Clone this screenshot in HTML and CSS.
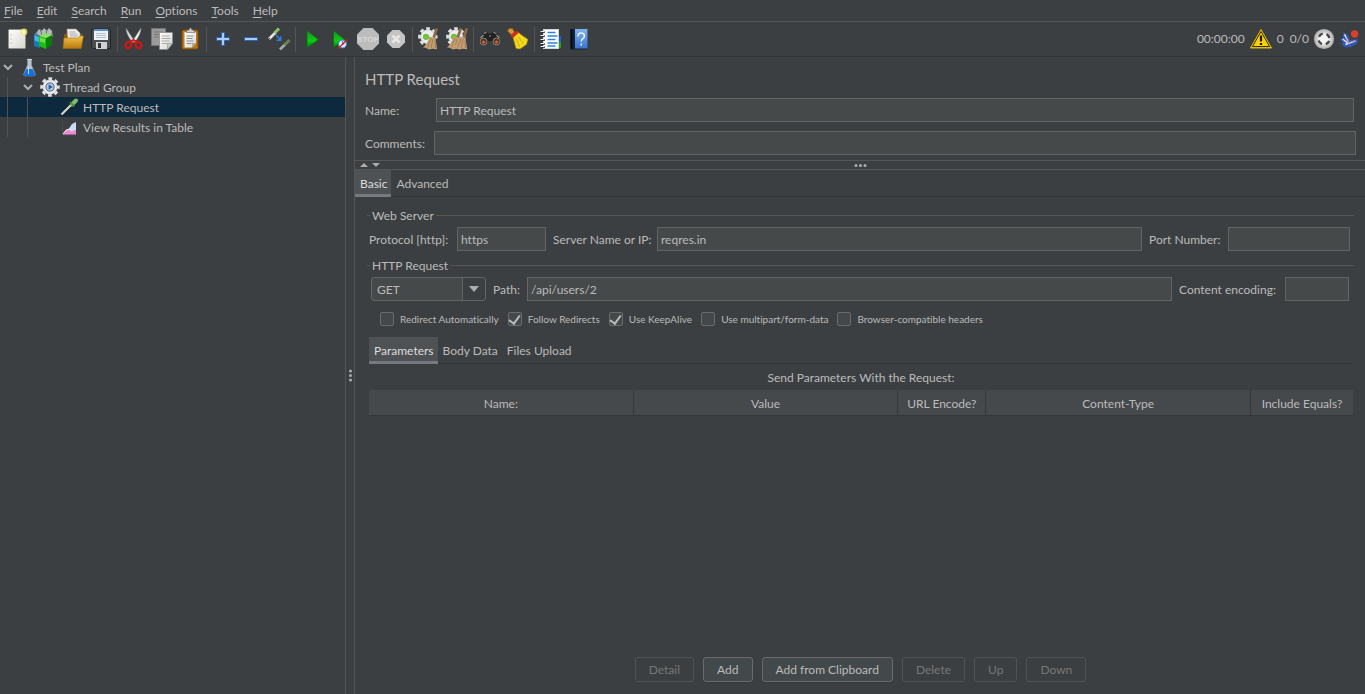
FILE: index.html
```
<!DOCTYPE html>
<html lang="en">
  <head>
    <meta charset="UTF-8" />
    <meta name="viewport" content="width=device-width, initial-scale=1.0" />
    <title>HTTP Request</title>

    <link rel="stylesheet" href="styles.css">
  </head>
  <body>
    <!-- Shared gradients and shapes -->
    <svg class="defs" width="0" height="0" aria-hidden="true">
      <defs>
        <linearGradient id="paper" x1="0" y1="0" x2="1" y2="1">
          <stop offset="0" stop-color="#ffffff" />
          <stop offset="1" stop-color="#d6d6d2" />
        </linearGradient>
        <linearGradient id="gold" x1="0" y1="0" x2="0" y2="1">
          <stop offset="0" stop-color="#f3c34a" />
          <stop offset="1" stop-color="#b9790c" />
        </linearGradient>
        <linearGradient id="green" x1="0" y1="0" x2="0" y2="1">
          <stop offset="0" stop-color="#1f8a2a" />
          <stop offset="0.6" stop-color="#08d010" />
          <stop offset="1" stop-color="#0a6a0e" />
        </linearGradient>
        <linearGradient id="blue" x1="0" y1="0" x2="0" y2="1">
          <stop offset="0" stop-color="#7fb2ee" />
          <stop offset="1" stop-color="#3a76cc" />
        </linearGradient>
        <radialGradient id="steel">
          <stop offset="0.4" stop-color="#f4f4f4" />
          <stop offset="1" stop-color="#a8a8a8" />
        </radialGradient>
        <g id="gear">
          <circle cx="12" cy="12" r="8.5" fill="none" stroke="#dfe1e5" stroke-width="4.500" stroke-dasharray="3.740 2.936" stroke-dashoffset="1.870" />
          <circle cx="12" cy="12" r="8.2" fill="#d5d8dc" />
          <circle cx="12" cy="12" r="7" fill="#eceef0" />
        </g>
        <g id="broom">
          <path d="M16.500 1l2.500 .8-3 9.500-2.600-1z" fill="#8b6a48" />
          <path d="M10.500 9.500l6 1.800 1.600 11-4.500-.6-3.600.8-3.300-1.800-2.700-.2c3.200-2.600 5-6 6.500-11z" fill="#c39e72" />
          <path d="M12 11.500L8.500 20.500M14 12l-2 9M16 13l.5 8" stroke="#94704a" stroke-width=".7" fill="none" />
        </g>
      </defs>
    </svg>

    <nav class="menu-bar">
      <button class="menu"><u>F</u>ile</button>
      <button class="menu"><u>E</u>dit</button>
      <button class="menu"><u>S</u>earch</button>
      <button class="menu"><u>R</u>un</button>
      <button class="menu"><u>O</u>ptions</button>
      <button class="menu"><u>T</u>ools</button>
      <button class="menu"><u>H</u>elp</button>
    </nav>

    <div class="toolbar">
      <button class="tool" aria-label="New">
        <svg viewBox="0 0 24 24"><rect x="3.5" y="2.5" width="17" height="19" rx="1" fill="url(#paper)" stroke="#8f8f8a" /><path d="M5.5 8h1M5.5 12h1M5.5 16h1" stroke="#999" /><circle cx="19" cy="5" r="3.4" fill="#f6e96a" opacity=".8" /><circle cx="19" cy="5" r="1.6" fill="#fffde0" /></svg>
      </button>
      <button class="tool" aria-label="Templates">
        <svg viewBox="0 0 24 24"><path d="M1.500 7L6 3l13 .5 1 6L12 12z" fill="#7d898c" /><path d="M4 5l2-3 3 2 2-3 3 3 2-3 3 3-1 4H5z" fill="#b3babc" /><path d="M7 2l2 6M14 2l-1 6" stroke="#5e7378" /><path d="M1 7l6 2v12l-6-2z" fill="#1677bd" /><path d="M1.500 8L6 10v5l-4.500-1.500z" fill="#4ab2e4" /><path d="M6 9l7 2v11l-7-3z" fill="#21bd12" /><path d="M13 11l6-3v10l-6 4z" fill="#0a7c08" /><path d="M6 9l6-3 7 2-6 3z" fill="#8be35f" /><path d="M7 10.500l5 1.500v4L7 14.500z" fill="#6ae240" /></svg>
      </button>
      <button class="tool" aria-label="Open">
        <svg viewBox="0 0 24 24"><path d="M3 21V8l2-2h13l4 2-1 13z" fill="#8a5d0d" /><path d="M6 2h9l4 4v9H7z" fill="#eee" stroke="#999" stroke-width=".6" /><path d="M8.5 5h6M8.5 7h8M9 9h8" stroke="#999" stroke-width=".8" /><path d="M3 11h14l2-2h3.5L20 21.5H2z" fill="url(#gold)" stroke="#a06c0c" stroke-width=".6" /></svg>
      </button>
      <button class="tool" aria-label="Save">
        <svg viewBox="0 0 24 24"><path d="M3 2h17.500l1 1v18.500H4L2.500 20V3z" fill="#4b4d50" stroke="#242526" /><rect x="5" y="2" width="14" height="11" fill="#f0f3f6" /><rect x="5" y="2" width="14" height="2" fill="#5a91cb" /><path d="M7 6.500h10M7 8.500h10M7 10.500h10" stroke="#9db3c9" stroke-width=".8" /><rect x="7" y="15" width="11" height="7" fill="#cfd1d3" /><rect x="9" y="16" width="3" height="5" fill="#333" /></svg>
      </button>
      <span class="tool-separator"></span>
      <button class="tool" aria-label="Cut">
        <svg viewBox="0 0 24 24"><path d="M4 1l8.500 13-2 1.500C7 11 4 6 4 1z" fill="#d6d8da" stroke="#777" stroke-width=".4" /><path d="M19 1l-8.500 13 2 1.500C16 11 19 6 19 1z" fill="#f1f1f1" stroke="#777" stroke-width=".4" /><ellipse cx="6.500" cy="18" rx="2.700" ry="3.400" transform="rotate(30 6.500 18)" fill="none" stroke="#d8140f" stroke-width="2.200" /><ellipse cx="16.500" cy="18" rx="2.700" ry="3.400" transform="rotate(-30 16.500 18)" fill="none" stroke="#d8140f" stroke-width="2.200" /><path d="M8 15l3.500-2 3.500 2" fill="none" stroke="#d8140f" stroke-width="2" /></svg>
      </button>
      <button class="tool" aria-label="Copy">
        <svg viewBox="0 0 24 24"><path d="M1.500 1.500h14v17h-14z" fill="#9b9b9b" stroke="#777" /><path d="M4 5h9M4 7.500h9M4 10h7" stroke="#777" /><path d="M9.500 5.500h13v11l-5 6h-8z" fill="url(#paper)" stroke="#888" stroke-width=".7" /><path d="M11.500 9h8M11.500 11.500h9M11.500 14h8M11.500 16.500h6" stroke="#999" stroke-width=".8" /><path d="M17.500 22.500v-6h5z" fill="#c7c7c4" stroke="#888" stroke-width=".5" /></svg>
      </button>
      <button class="tool" aria-label="Paste">
        <svg viewBox="0 0 24 24"><rect x="4" y="3" width="16" height="19" rx="1.500" fill="#b97718" stroke="#7b4c0b" /><path d="M6.500 5h11.500v11l-4 4.500h-7.500z" fill="url(#paper)" /><path d="M8.500 9h7M8.500 11.500h6M8.500 14h7M8.500 16.500h5" stroke="#8e8e8e" /><path d="M14 20.500v-4.500h4z" fill="#aaa" /><path d="M8 5.500l1.500-2.500h1.500l1-2h1l1 2h1.500L17 5.500z" fill="#d2d2d2" stroke="#666" stroke-width=".6" /></svg>
      </button>
      <span class="tool-separator"></span>
      <button class="tool" aria-label="Expand all">
        <svg viewBox="0 0 24 24"><path d="M10.500 5.500h3v5h5v3h-5v5h-3v-5h-5v-3h5z" fill="#a9cdf5" stroke="#2f62ae" /></svg>
      </button>
      <button class="tool" aria-label="Collapse all">
        <svg viewBox="0 0 24 24"><rect x="5.500" y="10.500" width="13" height="3" fill="#a9cdf5" stroke="#2f62ae" /></svg>
      </button>
      <button class="tool" aria-label="Toggle">
        <svg viewBox="0 0 24 24"><path d="M2 12l7-7" stroke="#e3e3e0" stroke-width="2.600" /><path d="M7.500 6L12 1.500" stroke="#8cc46a" stroke-width="3" /><path d="M1 13l2-2" stroke="#333" /><path d="M9 8l4 4" stroke="#2b7be0" stroke-width="1.500" /><path d="M14.500 8.500v5.500H9z" fill="#2b7be0" /><path d="M13 22.500l6-6" stroke="#a8a8a5" stroke-width="2.600" /><path d="M17.500 18l5-5" stroke="#66854f" stroke-width="3" /></svg>
      </button>
      <span class="tool-separator"></span>
      <button class="tool" aria-label="Start">
        <svg viewBox="0 0 24 24"><path d="M7 3.500l11.500 9L7 21z" fill="url(#green)" stroke="#12651a" stroke-width=".8" /></svg>
      </button>
      <button class="tool" aria-label="Start no pauses">
        <svg viewBox="0 0 24 24"><path d="M5.500 3.500l11 9-11 8.500z" fill="url(#green)" stroke="#12651a" stroke-width=".8" /><circle cx="14.500" cy="17" r="4" fill="#eef4fb" stroke="#3f7fc4" /><path d="M14.500 14v3h2" stroke="#3f7fc4" fill="none" /><path d="M10.500 21.500l8.500-9" stroke="#d82020" stroke-width="1.400" /></svg>
      </button>
      <button class="tool" aria-label="Stop" disabled>
        <svg viewBox="0 0 24 24"><path d="M7.500 1h9L23 7.500v9L16.500 23h-9L1 16.500v-9z" fill="#bcbcbc" /><text x="12" y="15" text-anchor="middle" class="stop-text">STOP</text></svg>
      </button>
      <button class="tool" aria-label="Shutdown" disabled>
        <svg viewBox="0 0 24 24"><path d="M8.500 3h7L21 8.500v7L15.500 21h-7L3 15.500v-7z" fill="#c4c4c4" /><path d="M8.500 8.500l7 7M15.500 8.500l-7 7" stroke="#e8e8e8" stroke-width="2.600" /></svg>
      </button>
      <span class="tool-separator"></span>
      <button class="tool" aria-label="Clear">
        <svg viewBox="0 0 24 24"><g transform="translate(0 -1) scale(.9)"><use href="#gear" /><circle cx="10" cy="12" r="3.500" fill="#6fc33a" /></g><use href="#broom" x="2" /></svg>
      </button>
      <button class="tool" aria-label="Clear all">
        <svg viewBox="0 0 24 24"><g transform="translate(0 -1) scale(.9)"><use href="#gear" /><circle cx="10" cy="12" r="3.500" fill="#6fc33a" /></g><use href="#broom" x="-2" /><use href="#broom" x="4" /></svg>
      </button>
      <span class="tool-separator"></span>
      <button class="tool" aria-label="Search">
        <svg viewBox="0 0 24 24"><path d="M4.500 6l4-1.500 2 2h3l2-2 4 1.500 3.500 8-1.500 4h-5l-3-4h-3l-3 4h-5L1 14z" fill="#222" /><path d="M5.500 6.500l3-1M15.500 5.500l3 1M2.500 11l3-3M21.500 11l-3-3M11 9h2" stroke="#9a9a9a" stroke-width="1.200" /><circle cx="5.500" cy="14.500" r="3.500" fill="#5c2f18" stroke="#888" /><circle cx="18.500" cy="14.500" r="3.500" fill="#5c2f18" stroke="#888" /><circle cx="5.500" cy="15" r="1.500" fill="#c7703c" /><circle cx="18.500" cy="15" r="1.500" fill="#c7703c" /></svg>
      </button>
      <button class="tool" aria-label="Reset search">
        <svg viewBox="0 0 24 24"><path d="M1.500 4L3 1.500l3.500 0 2 3.500-3 3z" fill="#d99535" stroke="#88520f" stroke-width=".7" /><path d="M7 10.500L12 5c3 3 6 4.500 10 7.500l-1.500 5L14 22l-4-.5z" fill="#f2d81c" stroke="#9f7d08" stroke-width=".6" /><path d="M10 11.500l3.500 8M12.500 10l5 7" stroke="#c0a010" stroke-width=".8" /><path d="M4.500 9L10.500 3.500l2.500 2-6 5.500z" fill="#d82a18" /></svg>
      </button>
      <span class="tool-separator"></span>
      <button class="tool" aria-label="Function helper">
        <svg viewBox="0 0 24 24"><path d="M19 9h3v6h-3z" fill="#1268d0" /><path d="M19 15h3v6h-3z" fill="#14a516" /><rect x="4.500" y="2.500" width="15" height="19" fill="#fff" stroke="#d4d4d4" /><path d="M8.500 5.500h8M8.500 9h10M8.500 12.500h8M8.500 16h10M8.500 19h8" stroke="#2d82dd" stroke-width="1.300" /><path d="M2.500 5h3.500M2.500 9h3.500M2.500 13h3.500M2.500 17h3.500M2.500 20h3.500" stroke="#222" stroke-width="1.600" /><path d="M1.500 4.500h4M1.500 8.500h4M1.500 12.500h4M1.500 16.500h4M1.500 19.500h4" stroke="#eee" stroke-width="1" /></svg>
      </button>
      <button class="tool" aria-label="Help">
        <svg viewBox="0 0 24 24"><rect x="3.500" y="2" width="17" height="20.500" rx="1" fill="#14223a" /><rect x="8" y="2" width="12.500" height="19.500" fill="url(#blue)" /><path d="M4.500 2v20" stroke="#070d18" stroke-width="2" /><path d="M11 9.500q0-3.500 3.200-3.500t3.200 3q0 1.700-1.800 2.900-1.300.9-1.300 2.600M14.300 16.500v2" fill="none" stroke="#e9f3ff" stroke-width="1.500" /></svg>
      </button>

      <div class="status">
        <span>00:00:00</span>
        <button class="status-button" aria-label="Show errors">
          <svg viewBox="0 0 24 24"><path d="M12 2.500L22.500 21H1.500z" fill="#e7be05" stroke="#d9b70b" stroke-linejoin="round" /><path d="M12 4.500L20.500 19.500H3.500z" fill="#f6d20c" stroke="#3a3207" stroke-linejoin="round" /><path d="M12 8.500v6M12 16v2" stroke="#1c1a08" stroke-width="2.200" /></svg>
        </button>
        <span>0</span>
        <span class="threads">0/0</span>
        <svg class="status-icon" viewBox="0 0 24 24"><circle cx="12" cy="12" r="11" fill="url(#steel)" /><circle cx="12" cy="12" r="6" fill="none" stroke="#454545" stroke-width="2.600" stroke-dasharray="5 4.425" stroke-dashoffset="-2.200" /></svg>
        <svg class="status-icon" viewBox="0 0 24 24"><path d="M5 4l5 4 2 5 9-1-1 5-7 4H6l-3-3 1-2-3-4 3-1z" fill="#3158ad" /><path d="M6 7l4 8M7 18l11-4M4 12l6 5" stroke="#dfe8f7" stroke-width="1.500" /><path d="M7 10l4 8M10 16l8-2" stroke="#c66a8a" stroke-width=".8" /><circle cx="17" cy="6.500" r="4" fill="#d7402e" /></svg>
      </div>
    </div>

    <main>
      <ul class="tree">
        <li class="tree-row">
          <span class="tree-slot"><svg class="chevron" viewBox="0 0 16 16"><path d="M4 6l4 4 4-4" /></svg></span>
          <span class="tree-slot"><svg class="tree-icon" viewBox="0 0 20 20"><path d="M7.500 2h4v6l4 9.500-1 1.500h-10l-1-1.500 4-9.500z" fill="#b4c3d3" stroke="#8a9299" stroke-width=".5" /><path d="M6.500 12h6l3 5.500-1 1.500h-10l-1-1.500z" fill="#176fe0" /><path d="M7 2.500h5" stroke="#ccc" /><path d="M8.500 9v8" stroke="#b9defa" /></svg></span>
          <span class="tree-text">Test Plan</span>
        </li>
        <li class="tree-row">
          <span class="tree-slot guide"></span>
          <span class="tree-slot"><svg class="chevron" viewBox="0 0 16 16"><path d="M4 6l4 4 4-4" /></svg></span>
          <span class="tree-slot"><svg class="tree-icon" viewBox="1 1 22 22"><use href="#gear" /><circle cx="12" cy="12" r="4.500" fill="#b9c9e2" stroke="#42546f" /><path d="M10.500 9l4.500 3-4.500 3z" fill="#245da8" /></svg></span>
          <span class="tree-text">Thread Group</span>
        </li>
        <li class="tree-row selected">
          <span class="tree-slot guide"></span>
          <span class="tree-slot guide"></span>
          <span class="tree-slot"></span>
          <span class="tree-slot"><svg class="tree-icon" viewBox="0 0 20 20"><path d="M2 17.500L12 7.500" stroke="#202020" stroke-width="3.600" /><path d="M1.500 17.500l10-10" stroke="#d6d6d2" stroke-width="2.200" /><path d="M12 7.500l4-4" stroke="#7fbc66" stroke-width="4" stroke-linecap="round" /><path d="M10 5l4.500 4.500" stroke="#4b7d3d" stroke-width="1.600" /></svg></span>
          <span class="tree-text">HTTP Request</span>
        </li>
        <li class="tree-row">
          <span class="tree-slot guide"></span>
          <span class="tree-slot guide"></span>
          <span class="tree-slot"></span>
          <span class="tree-slot"><svg class="tree-icon" viewBox="0 0 20 20"><path d="M2.500 3v15H17" fill="none" stroke="#555a5e" stroke-dasharray="1 1" /><path d="M8 13l4-6 4-2v12H8z" fill="#c9dcf7" /><path d="M3 17l3-4 3-1 3 2 4-1v4.500H3z" fill="#ee8bd4" /><path d="M3 17l3-4 3-1 3 2" fill="none" stroke="#fff" stroke-width=".8" /></svg></span>
          <span class="tree-text">View Results in Table</span>
        </li>
      </ul>

      <div class="split-vertical">
        <svg width="3" height="13" viewBox="0 0 3 13"><circle cx="1.500" cy="2" r="1.500" /><circle cx="1.500" cy="6.500" r="1.500" /><circle cx="1.500" cy="11" r="1.500" /></svg>
      </div>

      <form class="editor">
        <h1>HTTP Request</h1>
        <div class="name-row">
          <label for="name">Name:</label>
          <input id="name" type="text" value="HTTP Request" />
        </div>
        <div class="comments-row">
          <label for="comments">Comments:</label>
          <input id="comments" type="text" />
        </div>

        <div class="split-horizontal">
          <svg class="collapse-arrows" width="20" height="6" viewBox="0 0 20 6"><path d="M0 5l4-4 4 4zM12 1h8l-4 4z" /></svg>
          <svg width="13" height="3" viewBox="0 0 13 3"><circle cx="2" cy="1.500" r="1.500" /><circle cx="6.500" cy="1.500" r="1.500" /><circle cx="11" cy="1.500" r="1.500" /></svg>
        </div>

        <div class="tabs">
          <button type="button" class="tab active">Basic</button>
          <button type="button" class="tab">Advanced</button>
        </div>

        <section class="basic">
          <h2>Web Server</h2>
          <div class="server-row">
            <label for="protocol">Protocol [http]:</label>
            <input id="protocol" type="text" value="https" />
            <label for="server">Server Name or IP:</label>
            <input id="server" type="text" value="reqres.in" />
            <label for="port">Port Number:</label>
            <input id="port" type="text" />
          </div>

          <h2>HTTP Request</h2>
          <div class="path-row">
            <div class="combo">
              <select aria-label="Method">
                <option>GET</option>
                <option>POST</option>
                <option>PUT</option>
                <option>DELETE</option>
              </select>
              <svg class="combo-arrow" width="10" height="6" viewBox="0 0 10 6"><path d="M0 0h10L5 6z" /></svg>
            </div>
            <label for="path">Path:</label>
            <input id="path" type="text" value="/api/users/2" />
            <label for="encoding">Content encoding:</label>
            <input id="encoding" type="text" />
          </div>

          <div class="options-row">
            <label><input type="checkbox" />Redirect Automatically</label>
            <label><input type="checkbox" checked />Follow Redirects</label>
            <label><input type="checkbox" checked />Use KeepAlive</label>
            <label><input type="checkbox" />Use multipart/form-data</label>
            <label><input type="checkbox" />Browser-compatible headers</label>
          </div>

          <div class="tabs inner-tabs">
            <button type="button" class="tab active">Parameters</button>
            <button type="button" class="tab">Body Data</button>
            <button type="button" class="tab">Files Upload</button>
          </div>

          <table>
            <caption>Send Parameters With the Request:</caption>
            <colgroup>
              <col class="col-wide" />
              <col class="col-wide" />
              <col class="col-encode" />
              <col class="col-wide" />
              <col class="col-equals" />
            </colgroup>
            <thead>
              <tr>
                <th>Name:</th>
                <th>Value</th>
                <th>URL Encode?</th>
                <th>Content-Type</th>
                <th>Include Equals?</th>
              </tr>
            </thead>
          </table>

          <div class="actions">
            <button type="button" disabled>Detail</button>
            <button type="button">Add</button>
            <button type="button">Add from Clipboard</button>
            <button type="button" disabled>Delete</button>
            <button type="button" disabled>Up</button>
            <button type="button" disabled>Down</button>
          </div>
        </section>
      </form>
    </main>
  </body>
</html>
```
FILE: styles.css
```
* {
  box-sizing: border-box;
}

body {
  display: flex;
  flex-direction: column;
  min-height: 100vh;
  margin: 0;
  background: #3c3f41;
  color: #bbbbbb;
  font: 12px/16px Lato, "Open Sans", sans-serif;
  font-variant-ligatures: none;
}

button,
input,
select {
  font: inherit;
  color: inherit;
}

.defs {
  position: absolute;
}

/* Menu bar */
.menu-bar {
  display: flex;
  height: 22px;
  border-bottom: 1px solid #555555;
}

.menu {
  padding: 0 7px 0 4px;
  margin-right: 3px;
  border: none;
  background: none;
}

.menu u {
  text-underline-offset: 2px;
}

/* Toolbar */
.toolbar {
  display: flex;
  align-items: center;
  height: 35px;
  padding: 0 4px 0 3px;
  border-bottom: 1px solid #323435;
}

.tool {
  width: 28px;
  height: 28px;
  padding: 2px;
  border: none;
  background: none;
}

.tool svg {
  display: block;
  width: 24px;
  height: 24px;
}

.stop-text {
  font: bold 8px "Liberation Sans Narrow", "Liberation Sans", sans-serif;
  fill: #d8d8d8;
}

.tool-separator {
  width: 5px;
  height: 25px;
  background: linear-gradient(#555555, #555555) center / 1px 100% no-repeat;
}

.status {
  display: flex;
  align-items: center;
  gap: 4px;
  margin-left: auto;
}

.status-button {
  width: 24px;
  height: 24px;
  padding: 0;
  border: none;
  background: none;
}

.status-button svg {
  display: block;
}

.threads {
  margin-left: 2px;
}

.status-icon {
  width: 22px;
  height: 22px;
}

/* Tree */
main {
  display: flex;
  flex: 1;
}

.tree {
  flex: 0 0 345px;
  margin: 0;
  padding: 0;
  list-style: none;
}

.tree-row {
  display: flex;
  align-items: center;
  height: 20px;
}

.tree-row.selected {
  background: #0d293e;
}

.tree-slot {
  width: 20px;
  height: 20px;
}

.guide {
  background: linear-gradient(#505355, #505355) 7px 0 / 1px 100% no-repeat;
}

.chevron {
  display: block;
  width: 16px;
  height: 20px;
  fill: none;
  stroke: #adadad;
  stroke-width: 2;
}

.tree-icon {
  display: block;
  width: 20px;
  height: 20px;
}

.tree-text {
  padding: 2px 0 0 3px;
}

.split-vertical {
  display: flex;
  flex: 0 0 10px;
  align-items: center;
  justify-content: center;
  border: solid #555555;
  border-width: 0 1px;
  fill: #adadad;
}

/* Editor */
.editor {
  display: flex;
  flex: 1;
  flex-direction: column;
  min-width: 0;
}

h1 {
  margin: 12px 10px 9px;
  font-size: 15px;
  font-weight: normal;
  line-height: 20px;
}

label {
  padding-top: 2px;
  white-space: nowrap;
}

input[type="text"] {
  width: 100%;
  min-width: 0;
  height: 24px;
  padding: 0 3px;
  border: 1px solid #646464;
  background: #45494a;
}

.name-row,
.comments-row {
  display: grid;
  grid-template-columns: 71px 1fr;
  align-items: center;
  padding: 0 11px 0 10px;
}

.comments-row {
  grid-template-columns: 69px 1fr;
  margin-top: 9px;
  padding-right: 9px;
}

.split-horizontal {
  display: grid;
  grid-template-columns: 1fr auto 1fr;
  align-items: center;
  height: 10px;
  margin-top: 5px;
  border: solid #555555;
  border-width: 1px 0;
  fill: #adadad;
}

.collapse-arrows {
  margin-left: 5px;
}

.tabs {
  display: flex;
  height: 27px;
  border-bottom: 1px solid #323435;
}

.tab {
  height: 27px;
  padding: 3px 4px 0 5px;
  border: none;
  border-bottom: 3px solid transparent;
  background: none;
}

.tab.active {
  border-bottom-color: #747a80;
  background: #4e5254;
  color: #dddddd;
}

.basic {
  display: flex;
  flex: 1;
  flex-direction: column;
  padding: 10px 11px 12px 12px;
}

h2 {
  display: flex;
  align-items: center;
  gap: 2px;
  margin: 0;
  font-size: 12px;
  font-weight: normal;
  line-height: 17px;
}

h2::before,
h2::after {
  content: "";
  width: 3px;
  height: 1px;
  background: #555555;
}

h2::after {
  flex: 1;
}

.server-row,
.path-row {
  display: grid;
  grid-template-columns: 81px 89px 97px 1fr 72px 122px;
  align-items: center;
  gap: 7px;
  margin: 3px 4px 6px 2px;
}

.path-row {
  grid-template-columns: 115px 27px 1fr 99px 64px;
  margin: 3px 5px 10px 4px;
}

.combo {
  position: relative;
}

.combo select {
  display: block;
  width: 100%;
  height: 24px;
  padding: 1px 28px 0 5px;
  border: 1px solid #646464;
  border-radius: 3px;
  background: linear-gradient(90deg, #646464 1px, #3c3f41 1px) right / 23px 100% no-repeat #45494a;
  appearance: none;
}

.combo-arrow {
  position: absolute;
  top: 9px;
  right: 7px;
  fill: #adadad;
  pointer-events: none;
}

.options-row {
  display: flex;
  gap: 9px;
  height: 16px;
  padding-left: 13px;
  font-size: 10px;
}

.options-row label {
  display: flex;
  align-items: center;
  gap: 6px;
  padding: 0;
}

input[type="checkbox"] {
  display: flex;
  justify-content: center;
  width: 14px;
  height: 14px;
  margin: 0;
  border: 1px solid #6b6b6b;
  border-radius: 2px;
  background: #43494a;
  appearance: none;
}

input[type="checkbox"]:checked::before {
  content: "";
  width: 5px;
  height: 9px;
  border: solid #bbbbbb;
  border-width: 0 2px 2px 0;
  transform: rotate(36deg);
}

.inner-tabs {
  margin: 10px 1px 0 2px;
}

table {
  width: calc(100% - 3px);
  margin-left: 2px;
  border-collapse: separate;
  border-spacing: 0;
  table-layout: fixed;
}

caption {
  padding: 6px 0 4px;
}

.col-encode {
  width: 88px;
}

.col-equals {
  width: 102px;
}

th {
  height: 26px;
  padding: 2px 0 0;
  border: solid #34373a;
  border-width: 0 1px 1px 0;
  background: #45494b;
  font-weight: normal;
}

th:last-child {
  border-right: none;
}

.actions {
  display: flex;
  justify-content: center;
  gap: 9px;
  margin-top: auto;
}

.actions button {
  height: 25px;
  padding: 0 13px;
  border: 1px solid #6b6b6b;
  border-radius: 3px;
  background: #43494a;
  box-shadow: 0 1px 0 #35383a;
}

.actions button:disabled {
  border-color: #505355;
  background: none;
  box-shadow: none;
  color: #777777;
}
```
